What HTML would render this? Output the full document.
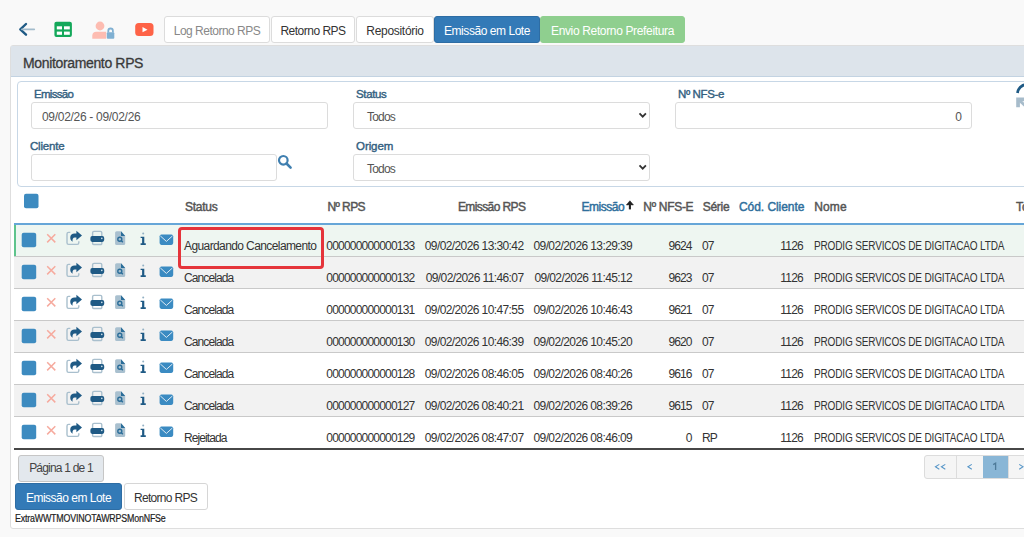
<!DOCTYPE html>
<html><head><meta charset="utf-8">
<style>
*{box-sizing:border-box;margin:0;padding:0}
html,body{width:1024px;height:537px;overflow:hidden;background:#f9f9f9;font-family:"Liberation Sans",sans-serif;color:#333}
.abs{position:absolute}
.tab{position:absolute;top:16px;height:27px;border:1px solid #dcdcdc;border-radius:3px;background:#fff;font-size:12px;line-height:29px;text-align:center;color:#333;letter-spacing:-0.5px}
#panel{position:absolute;left:10px;top:45px;width:1030px;height:484px;background:#fff;border:1px solid #dedede;border-radius:3px}
#phead{position:absolute;left:0;top:0;width:100%;height:31px;background:#dde4eb;border-bottom:1px solid #c3d3e2}
#ptitle{position:absolute;left:12px;top:8.5px;font-size:14px;color:#3a3a3a;letter-spacing:-0.35px;-webkit-text-stroke:0.3px #3a3a3a}
#fset{position:absolute;left:6px;top:35px;width:1030px;height:106px;border:1px solid #c7d7e6;border-radius:4px}
.lbl{position:absolute;font-size:11.5px;font-weight:normal;-webkit-text-stroke:0.4px #33607f;color:#33607f;letter-spacing:-0.5px}
.inp{position:absolute;height:27px;border:1px solid #dcdcdc;border-radius:3px;background:#fff;font-size:12px;color:#555;line-height:29px}
.th{position:absolute;top:200px;font-size:12px;font-weight:normal;-webkit-text-stroke:0.45px currentColor;white-space:nowrap;line-height:14px}
.tr{position:absolute;left:14px;width:1010px;overflow:visible}
.tr>svg{left:-14px!important}
.td{position:absolute;top:14.4px;font-size:12px;color:#333;white-space:nowrap;line-height:14px}
</style></head><body>

<!-- toolbar icons -->
<svg class="abs" style="left:0;top:0" width="160" height="45">
  <path d="M26 24 L20.3 29.35 L26 34.7" fill="none" stroke="#1f5a85" stroke-width="2.4" stroke-linecap="round" stroke-linejoin="round"/>
  <line x1="22" y1="29.35" x2="34.2" y2="29.35" stroke="#a3bccc" stroke-width="1.9" stroke-linecap="round"/>
  <rect x="54.4" y="21.8" width="17.5" height="15.2" rx="2" fill="#14a85a"/>
  <rect x="56.8" y="26.3" width="5.2" height="3.1" fill="#fff"/>
  <rect x="64" y="26.3" width="5.8" height="3.1" fill="#fff"/>
  <rect x="56.8" y="31.6" width="5.2" height="3.2" fill="#fff"/>
  <rect x="64" y="31.6" width="5.8" height="3.2" fill="#fff"/>
  <circle cx="100" cy="26" r="4.4" fill="#fdbcb1"/>
  <path d="M92.3 38.8 V35.5 A4 4 0 0 1 96.3 31.8 H106.2 V38.8 Z" fill="#fdbcb1"/>
  <path d="M108.3 32.5 V30.8 A2.3 2.3 0 0 1 112.9 30.8 V32.5" fill="none" stroke="#80b0d2" stroke-width="1.8"/>
  <rect x="106.8" y="32.2" width="7.5" height="6.6" rx="1" fill="#80b0d2"/>
  <rect x="135.2" y="22.9" width="18.3" height="13" rx="3.5" fill="#fe6347"/>
  <path d="M142.5 27.1 L147.5 29.7 L142.5 32.3 Z" fill="#fff"/>
</svg>

<div class="tab" style="left:164px;width:106px;color:#888">Log Retorno RPS</div>
<div class="tab" style="left:271px;width:84px">Retorno RPS</div>
<div class="tab" style="left:356px;width:78px;letter-spacing:-0.3px">Repositório</div>
<div class="tab" style="left:434px;width:106px;background:#337ab7;border-color:#2e6da4;color:#fff;letter-spacing:-0.45px">Emissão em Lote</div>
<div class="tab" style="left:540px;width:145px;background:#8fcf8f;border-color:#8fcf8f;color:#fff;letter-spacing:-0.35px">Envio Retorno Prefeitura</div>

<div id="panel">
  <div id="phead"><div id="ptitle">Monitoramento RPS</div></div>
  <div id="fset"></div>
</div>

<!-- filter labels & inputs (page coords) -->
<div class="lbl" style="left:34px;top:88px;letter-spacing:-0.7px">Emissão</div>
<div class="inp" style="left:31px;top:102px;width:297px;padding-left:10px;letter-spacing:-0.3px">09/02/26 - 09/02/26</div>
<div class="lbl" style="left:30px;top:139.5px;letter-spacing:-0.2px">Cliente</div>
<div class="inp" style="left:31px;top:154px;width:246px"></div>
<svg class="abs" style="left:277px;top:154px" width="16" height="16"><circle cx="6.3" cy="6.3" r="4.3" fill="none" stroke="#3f7fb0" stroke-width="2.2"/><line x1="9.5" y1="9.5" x2="13.6" y2="13.6" stroke="#3f7fb0" stroke-width="2.6" stroke-linecap="round"/></svg>

<div class="lbl" style="left:356px;top:88px;letter-spacing:-0.35px">Status</div>
<div class="inp" style="left:353px;top:102px;width:297px;padding-left:13px;letter-spacing:-0.8px">Todos</div>
<svg class="abs" style="left:637px;top:111px" width="12" height="9"><path d="M2.5 2.3 L5.7 5.6 L8.9 2.3" fill="none" stroke="#333" stroke-width="1.8"/></svg>
<div class="lbl" style="left:356px;top:139.5px;letter-spacing:-0.07px">Origem</div>
<div class="inp" style="left:353px;top:154px;width:297px;padding-left:13px;letter-spacing:-0.8px">Todos</div>
<svg class="abs" style="left:637px;top:163px" width="12" height="9"><path d="M2.5 2.3 L5.7 5.6 L8.9 2.3" fill="none" stroke="#333" stroke-width="1.8"/></svg>

<div class="lbl" style="left:678px;top:88px;letter-spacing:-0.36px">Nº NFS-e</div>
<div class="inp" style="left:675px;top:102px;width:297px;text-align:right;padding-right:9px">0</div>

<!-- refresh icon -->
<svg class="abs" style="left:1006.5px;top:78px" width="22" height="32">
  <path d="M10.5 15 A9.5 9.5 0 0 1 19 6.5" fill="none" stroke="#1f5a85" stroke-width="2.8"/>
  <path d="M9.2 19.5 H20 V23.2 H12.9 V29.2 H9.2 Z M11 21 L20 29" fill="#a7bccb" stroke="#a7bccb" stroke-width="0"/>
  <path d="M11.5 21.5 L19 28.5" stroke="#a7bccb" stroke-width="3"/>
</svg>

<!-- footer -->
<div class="abs" style="left:18px;top:455px;width:86px;height:27px;background:#e3e8ed;border:1px solid #c6c6c6;border-radius:3px;font-size:12px;line-height:25px;text-align:center;color:#444;letter-spacing:-0.8px">Página 1 de 1</div>
<div class="abs" style="left:15px;top:482.5px;width:107px;height:27px;background:#337ab7;border:1px solid #2e6da4;border-radius:3px;font-size:12px;line-height:29px;text-align:center;color:#fff;letter-spacing:-0.5px">Emissão em Lote</div>
<div class="abs" style="left:123.5px;top:482.5px;width:84px;height:27px;background:#fff;border:1px solid #d6d6d6;border-radius:3px;font-size:12px;line-height:29px;text-align:center;color:#333;letter-spacing:-0.7px">Retorno RPS</div>
<div class="abs" style="left:14.5px;top:512.5px;font-size:10px;line-height:12px;color:#222;letter-spacing:-0.2px;-webkit-text-stroke:0.2px #222;transform:scaleX(0.885);transform-origin:0 0">ExtraWWTMOVINOTAWRPSMonNFSe</div>
<div class="abs" style="left:923.5px;top:455px;width:120px;height:23.5px;border:1px solid #dcdcdc;border-radius:3px;background:#f5f5f5;overflow:hidden"></div>
<div class="abs" style="left:956px;top:456px;width:1px;height:21.5px;background:#dcdcdc"></div>
<div class="abs" style="left:983px;top:455.5px;width:24.5px;height:22.5px;background:#89b6d6"></div>
<div class="abs" style="left:1007.5px;top:456px;width:1px;height:21.5px;background:#dcdcdc"></div>
<svg class="abs" style="left:920px;top:450px" width="104" height="35">
  <path d="M19.3 14.4 L15.4 16.8 L19.3 19.2 M25.3 14.4 L21.4 16.8 L25.3 19.2 M51.8 14.4 L47.9 16.8 L51.8 19.2" fill="none" stroke="#5796c8" stroke-width="1.05"/>
  <path d="M99.2 14.4 L103.1 16.8 L99.2 19.2" fill="none" stroke="#5796c8" stroke-width="1.05"/>
  <path d="M73.2 14.6 L75.6 13.2 V19.9" fill="none" stroke="#4d7a99" stroke-width="1.3"/>
</svg>
<!--TABLE-->
<div id="tbl" class="abs" style="left:0;top:0;width:1024px;height:537px">
<svg class="abs" style="left:0;top:0" width="40" height="220"><rect x="24" y="193.8" width="14.5" height="14.5" rx="2" fill="#3d8bc0"/></svg>
<div class="th" style="left:185px;letter-spacing:-0.25px;color:#555">Status</div>
<div class="th" style="left:327.5px;letter-spacing:-0.6px;color:#555">Nº RPS</div>
<div class="th" style="right:498.69999999999993px;letter-spacing:-0.6px;color:#555">Emissão RPS</div>
<div class="th" style="right:399.9px;letter-spacing:-0.5px;color:#2f6f9c">Emissão</div>
<svg class="abs" style="left:620px;top:195px" width="20" height="20"><path d="M9.9 8 V14.4" stroke="#222" stroke-width="2.1"/><path d="M9.9 5.8 L13.4 9.9 L11.3 9.9 L9.9 8.4 L8.5 9.9 L6.4 9.9 Z" fill="#222" stroke="#222" stroke-width="0.6" stroke-linejoin="round"/></svg>
<div class="th" style="left:643.3px;letter-spacing:-0.3px;color:#555">Nº NFS-E</div>
<div class="th" style="left:702.7px;letter-spacing:-0.25px;color:#555">Série</div>
<div class="th" style="left:739px;letter-spacing:-0.06px;color:#2f6f9c">Cód. Cliente</div>
<div class="th" style="left:814.2px;letter-spacing:0.15px;color:#555">Nome</div>
<div class="th" style="left:1016px;letter-spacing:-0.1px;color:#555">To</div>
<div class="abs" style="left:14px;top:223px;width:1010px;height:2px;background:#66a6d8"></div>
<div class="tr" style="top:225px;height:31px;background:#eef6f1">
<div class="abs" style="left:0;top:0;width:2px;height:31px;background:#5ec48c"></div>
<svg class="abs" style="left:0;top:0" width="180" height="32">
<rect x="21.7" y="7.8" width="14.5" height="14.5" rx="2" fill="#3d8bc0"/>
<path d="M47.2 9.3 L55.3 17.4 M55.3 9.3 L47.2 17.4" stroke="#f6aa9e" stroke-width="1.5"/>
<path d="M70.3 7.4 H68.6 A1.6 1.6 0 0 0 67 9 V17.8 A1.6 1.6 0 0 0 68.6 19.4 H77.2 A1.6 1.6 0 0 0 78.8 17.8 V16.2" fill="none" stroke="#a9bfcd" stroke-width="1.4"/>
<path d="M76.4 5.8 L82 10.5 L76.4 15.2 V12.6 H74.8 C72.9 12.6 72.2 14.2 72.6 16.8 C69.2 14.8 69.2 8.5 74.6 8.5 H76.4 Z" fill="#1f5a85"/>
<path d="M92.6 11 V7.8 A1.4 1.4 0 0 1 94 6.4 H100.4 A1.4 1.4 0 0 1 101.8 7.8 V11 M92.6 16.8 V18.4 A1.1 1.1 0 0 0 93.7 19.5 H100.7 A1.1 1.1 0 0 0 101.8 18.4 V16.8" fill="none" stroke="#a9bfcd" stroke-width="1.4"/>
<rect x="90.4" y="11.1" width="13.8" height="5.8" rx="1.8" fill="#1f5a85"/>
<circle cx="101.8" cy="13.4" r="0.8" fill="#cfe0ea"/>
<path d="M116.6 6.2 H120.9 L125.2 10.9 V18.4 A1.5 1.5 0 0 1 123.7 19.9 H116.6 A1.5 1.5 0 0 1 115.1 18.4 V7.7 A1.5 1.5 0 0 1 116.6 6.2 Z" fill="#a9c0cf"/>
<path d="M121 6.2 L125.2 10.9 H121 Z" fill="#2a6d99"/>
<circle cx="119.8" cy="14.2" r="2" fill="none" stroke="#2a6d99" stroke-width="1.4"/>
<path d="M121.2 15.6 L122.8 17.3" stroke="#2a6d99" stroke-width="1.4"/>
<circle cx="143.2" cy="8.5" r="1" fill="#93b1c4"/>
<path d="M140.6 11.8 H144.3 V18.3 H145.8 V19.9 H140.6 V18.3 H142.1 V13.1 H140.6 Z" fill="#1f5a85"/>
<rect x="159.6" y="9.5" width="13.6" height="10.4" rx="1.8" fill="#3b8bc2"/>
<path d="M160.3 10.9 L166.4 16.4 L172.5 10.9" fill="none" stroke="#dce9f3" stroke-width="1"/>
</svg>
<div class="td" style="left:170px;letter-spacing:-0.6px">Aguardando Cancelamento</div>
<div class="td" style="left:312.3px;letter-spacing:-0.8px">000000000000133</div>
<div class="td" style="right:500.5px;letter-spacing:-0.6px">09/02/2026 13:30:42</div>
<div class="td" style="right:391.79999999999995px;letter-spacing:-0.6px">09/02/2026 13:29:39</div>
<div class="td" style="right:332.5px;letter-spacing:-0.9px">9624</div>
<div class="td" style="left:687.9px;letter-spacing:-0.8px">07</div>
<div class="td" style="right:221.10000000000002px;letter-spacing:-0.8px">1126</div>
<div class="td" style="left:799.6px;letter-spacing:-0.2px;transform:scaleX(0.837);transform-origin:0 0">PRODIG SERVICOS DE DIGITACAO LTDA</div>
</div>
<div class="abs" style="left:14px;top:256px;width:1010px;height:1px;background:#c9c9c9"></div>
<div class="tr" style="top:257px;height:31px;background:#f2f2f2">
<svg class="abs" style="left:0;top:0" width="180" height="32">
<rect x="21.7" y="7.8" width="14.5" height="14.5" rx="2" fill="#3d8bc0"/>
<path d="M47.2 9.3 L55.3 17.4 M55.3 9.3 L47.2 17.4" stroke="#f6aa9e" stroke-width="1.5"/>
<path d="M70.3 7.4 H68.6 A1.6 1.6 0 0 0 67 9 V17.8 A1.6 1.6 0 0 0 68.6 19.4 H77.2 A1.6 1.6 0 0 0 78.8 17.8 V16.2" fill="none" stroke="#a9bfcd" stroke-width="1.4"/>
<path d="M76.4 5.8 L82 10.5 L76.4 15.2 V12.6 H74.8 C72.9 12.6 72.2 14.2 72.6 16.8 C69.2 14.8 69.2 8.5 74.6 8.5 H76.4 Z" fill="#1f5a85"/>
<path d="M92.6 11 V7.8 A1.4 1.4 0 0 1 94 6.4 H100.4 A1.4 1.4 0 0 1 101.8 7.8 V11 M92.6 16.8 V18.4 A1.1 1.1 0 0 0 93.7 19.5 H100.7 A1.1 1.1 0 0 0 101.8 18.4 V16.8" fill="none" stroke="#a9bfcd" stroke-width="1.4"/>
<rect x="90.4" y="11.1" width="13.8" height="5.8" rx="1.8" fill="#1f5a85"/>
<circle cx="101.8" cy="13.4" r="0.8" fill="#cfe0ea"/>
<path d="M116.6 6.2 H120.9 L125.2 10.9 V18.4 A1.5 1.5 0 0 1 123.7 19.9 H116.6 A1.5 1.5 0 0 1 115.1 18.4 V7.7 A1.5 1.5 0 0 1 116.6 6.2 Z" fill="#a9c0cf"/>
<path d="M121 6.2 L125.2 10.9 H121 Z" fill="#2a6d99"/>
<circle cx="119.8" cy="14.2" r="2" fill="none" stroke="#2a6d99" stroke-width="1.4"/>
<path d="M121.2 15.6 L122.8 17.3" stroke="#2a6d99" stroke-width="1.4"/>
<circle cx="143.2" cy="8.5" r="1" fill="#93b1c4"/>
<path d="M140.6 11.8 H144.3 V18.3 H145.8 V19.9 H140.6 V18.3 H142.1 V13.1 H140.6 Z" fill="#1f5a85"/>
<rect x="159.6" y="9.5" width="13.6" height="10.4" rx="1.8" fill="#3b8bc2"/>
<path d="M160.3 10.9 L166.4 16.4 L172.5 10.9" fill="none" stroke="#dce9f3" stroke-width="1"/>
</svg>
<div class="td" style="left:170px;letter-spacing:-0.9px">Cancelada</div>
<div class="td" style="left:312.3px;letter-spacing:-0.8px">000000000000132</div>
<div class="td" style="right:500.5px;letter-spacing:-0.6px">09/02/2026 11:46:07</div>
<div class="td" style="right:391.79999999999995px;letter-spacing:-0.6px">09/02/2026 11:45:12</div>
<div class="td" style="right:332.5px;letter-spacing:-0.9px">9623</div>
<div class="td" style="left:687.9px;letter-spacing:-0.8px">07</div>
<div class="td" style="right:221.10000000000002px;letter-spacing:-0.8px">1126</div>
<div class="td" style="left:799.6px;letter-spacing:-0.2px;transform:scaleX(0.837);transform-origin:0 0">PRODIG SERVICOS DE DIGITACAO LTDA</div>
</div>
<div class="abs" style="left:14px;top:288px;width:1010px;height:1px;background:#c9c9c9"></div>
<div class="tr" style="top:289px;height:31px;background:#fff">
<svg class="abs" style="left:0;top:0" width="180" height="32">
<rect x="21.7" y="7.8" width="14.5" height="14.5" rx="2" fill="#3d8bc0"/>
<path d="M47.2 9.3 L55.3 17.4 M55.3 9.3 L47.2 17.4" stroke="#f6aa9e" stroke-width="1.5"/>
<path d="M70.3 7.4 H68.6 A1.6 1.6 0 0 0 67 9 V17.8 A1.6 1.6 0 0 0 68.6 19.4 H77.2 A1.6 1.6 0 0 0 78.8 17.8 V16.2" fill="none" stroke="#a9bfcd" stroke-width="1.4"/>
<path d="M76.4 5.8 L82 10.5 L76.4 15.2 V12.6 H74.8 C72.9 12.6 72.2 14.2 72.6 16.8 C69.2 14.8 69.2 8.5 74.6 8.5 H76.4 Z" fill="#1f5a85"/>
<path d="M92.6 11 V7.8 A1.4 1.4 0 0 1 94 6.4 H100.4 A1.4 1.4 0 0 1 101.8 7.8 V11 M92.6 16.8 V18.4 A1.1 1.1 0 0 0 93.7 19.5 H100.7 A1.1 1.1 0 0 0 101.8 18.4 V16.8" fill="none" stroke="#a9bfcd" stroke-width="1.4"/>
<rect x="90.4" y="11.1" width="13.8" height="5.8" rx="1.8" fill="#1f5a85"/>
<circle cx="101.8" cy="13.4" r="0.8" fill="#cfe0ea"/>
<path d="M116.6 6.2 H120.9 L125.2 10.9 V18.4 A1.5 1.5 0 0 1 123.7 19.9 H116.6 A1.5 1.5 0 0 1 115.1 18.4 V7.7 A1.5 1.5 0 0 1 116.6 6.2 Z" fill="#a9c0cf"/>
<path d="M121 6.2 L125.2 10.9 H121 Z" fill="#2a6d99"/>
<circle cx="119.8" cy="14.2" r="2" fill="none" stroke="#2a6d99" stroke-width="1.4"/>
<path d="M121.2 15.6 L122.8 17.3" stroke="#2a6d99" stroke-width="1.4"/>
<circle cx="143.2" cy="8.5" r="1" fill="#93b1c4"/>
<path d="M140.6 11.8 H144.3 V18.3 H145.8 V19.9 H140.6 V18.3 H142.1 V13.1 H140.6 Z" fill="#1f5a85"/>
<rect x="159.6" y="9.5" width="13.6" height="10.4" rx="1.8" fill="#3b8bc2"/>
<path d="M160.3 10.9 L166.4 16.4 L172.5 10.9" fill="none" stroke="#dce9f3" stroke-width="1"/>
</svg>
<div class="td" style="left:170px;letter-spacing:-0.9px">Cancelada</div>
<div class="td" style="left:312.3px;letter-spacing:-0.8px">000000000000131</div>
<div class="td" style="right:500.5px;letter-spacing:-0.6px">09/02/2026 10:47:55</div>
<div class="td" style="right:391.79999999999995px;letter-spacing:-0.6px">09/02/2026 10:46:43</div>
<div class="td" style="right:332.5px;letter-spacing:-0.9px">9621</div>
<div class="td" style="left:687.9px;letter-spacing:-0.8px">07</div>
<div class="td" style="right:221.10000000000002px;letter-spacing:-0.8px">1126</div>
<div class="td" style="left:799.6px;letter-spacing:-0.2px;transform:scaleX(0.837);transform-origin:0 0">PRODIG SERVICOS DE DIGITACAO LTDA</div>
</div>
<div class="abs" style="left:14px;top:320px;width:1010px;height:1px;background:#c9c9c9"></div>
<div class="tr" style="top:321px;height:31px;background:#f2f2f2">
<svg class="abs" style="left:0;top:0" width="180" height="32">
<rect x="21.7" y="7.8" width="14.5" height="14.5" rx="2" fill="#3d8bc0"/>
<path d="M47.2 9.3 L55.3 17.4 M55.3 9.3 L47.2 17.4" stroke="#f6aa9e" stroke-width="1.5"/>
<path d="M70.3 7.4 H68.6 A1.6 1.6 0 0 0 67 9 V17.8 A1.6 1.6 0 0 0 68.6 19.4 H77.2 A1.6 1.6 0 0 0 78.8 17.8 V16.2" fill="none" stroke="#a9bfcd" stroke-width="1.4"/>
<path d="M76.4 5.8 L82 10.5 L76.4 15.2 V12.6 H74.8 C72.9 12.6 72.2 14.2 72.6 16.8 C69.2 14.8 69.2 8.5 74.6 8.5 H76.4 Z" fill="#1f5a85"/>
<path d="M92.6 11 V7.8 A1.4 1.4 0 0 1 94 6.4 H100.4 A1.4 1.4 0 0 1 101.8 7.8 V11 M92.6 16.8 V18.4 A1.1 1.1 0 0 0 93.7 19.5 H100.7 A1.1 1.1 0 0 0 101.8 18.4 V16.8" fill="none" stroke="#a9bfcd" stroke-width="1.4"/>
<rect x="90.4" y="11.1" width="13.8" height="5.8" rx="1.8" fill="#1f5a85"/>
<circle cx="101.8" cy="13.4" r="0.8" fill="#cfe0ea"/>
<path d="M116.6 6.2 H120.9 L125.2 10.9 V18.4 A1.5 1.5 0 0 1 123.7 19.9 H116.6 A1.5 1.5 0 0 1 115.1 18.4 V7.7 A1.5 1.5 0 0 1 116.6 6.2 Z" fill="#a9c0cf"/>
<path d="M121 6.2 L125.2 10.9 H121 Z" fill="#2a6d99"/>
<circle cx="119.8" cy="14.2" r="2" fill="none" stroke="#2a6d99" stroke-width="1.4"/>
<path d="M121.2 15.6 L122.8 17.3" stroke="#2a6d99" stroke-width="1.4"/>
<circle cx="143.2" cy="8.5" r="1" fill="#93b1c4"/>
<path d="M140.6 11.8 H144.3 V18.3 H145.8 V19.9 H140.6 V18.3 H142.1 V13.1 H140.6 Z" fill="#1f5a85"/>
<rect x="159.6" y="9.5" width="13.6" height="10.4" rx="1.8" fill="#3b8bc2"/>
<path d="M160.3 10.9 L166.4 16.4 L172.5 10.9" fill="none" stroke="#dce9f3" stroke-width="1"/>
</svg>
<div class="td" style="left:170px;letter-spacing:-0.9px">Cancelada</div>
<div class="td" style="left:312.3px;letter-spacing:-0.8px">000000000000130</div>
<div class="td" style="right:500.5px;letter-spacing:-0.6px">09/02/2026 10:46:39</div>
<div class="td" style="right:391.79999999999995px;letter-spacing:-0.6px">09/02/2026 10:45:20</div>
<div class="td" style="right:332.5px;letter-spacing:-0.9px">9620</div>
<div class="td" style="left:687.9px;letter-spacing:-0.8px">07</div>
<div class="td" style="right:221.10000000000002px;letter-spacing:-0.8px">1126</div>
<div class="td" style="left:799.6px;letter-spacing:-0.2px;transform:scaleX(0.837);transform-origin:0 0">PRODIG SERVICOS DE DIGITACAO LTDA</div>
</div>
<div class="abs" style="left:14px;top:352px;width:1010px;height:1px;background:#c9c9c9"></div>
<div class="tr" style="top:353px;height:31px;background:#fff">
<svg class="abs" style="left:0;top:0" width="180" height="32">
<rect x="21.7" y="7.8" width="14.5" height="14.5" rx="2" fill="#3d8bc0"/>
<path d="M47.2 9.3 L55.3 17.4 M55.3 9.3 L47.2 17.4" stroke="#f6aa9e" stroke-width="1.5"/>
<path d="M70.3 7.4 H68.6 A1.6 1.6 0 0 0 67 9 V17.8 A1.6 1.6 0 0 0 68.6 19.4 H77.2 A1.6 1.6 0 0 0 78.8 17.8 V16.2" fill="none" stroke="#a9bfcd" stroke-width="1.4"/>
<path d="M76.4 5.8 L82 10.5 L76.4 15.2 V12.6 H74.8 C72.9 12.6 72.2 14.2 72.6 16.8 C69.2 14.8 69.2 8.5 74.6 8.5 H76.4 Z" fill="#1f5a85"/>
<path d="M92.6 11 V7.8 A1.4 1.4 0 0 1 94 6.4 H100.4 A1.4 1.4 0 0 1 101.8 7.8 V11 M92.6 16.8 V18.4 A1.1 1.1 0 0 0 93.7 19.5 H100.7 A1.1 1.1 0 0 0 101.8 18.4 V16.8" fill="none" stroke="#a9bfcd" stroke-width="1.4"/>
<rect x="90.4" y="11.1" width="13.8" height="5.8" rx="1.8" fill="#1f5a85"/>
<circle cx="101.8" cy="13.4" r="0.8" fill="#cfe0ea"/>
<path d="M116.6 6.2 H120.9 L125.2 10.9 V18.4 A1.5 1.5 0 0 1 123.7 19.9 H116.6 A1.5 1.5 0 0 1 115.1 18.4 V7.7 A1.5 1.5 0 0 1 116.6 6.2 Z" fill="#a9c0cf"/>
<path d="M121 6.2 L125.2 10.9 H121 Z" fill="#2a6d99"/>
<circle cx="119.8" cy="14.2" r="2" fill="none" stroke="#2a6d99" stroke-width="1.4"/>
<path d="M121.2 15.6 L122.8 17.3" stroke="#2a6d99" stroke-width="1.4"/>
<circle cx="143.2" cy="8.5" r="1" fill="#93b1c4"/>
<path d="M140.6 11.8 H144.3 V18.3 H145.8 V19.9 H140.6 V18.3 H142.1 V13.1 H140.6 Z" fill="#1f5a85"/>
<rect x="159.6" y="9.5" width="13.6" height="10.4" rx="1.8" fill="#3b8bc2"/>
<path d="M160.3 10.9 L166.4 16.4 L172.5 10.9" fill="none" stroke="#dce9f3" stroke-width="1"/>
</svg>
<div class="td" style="left:170px;letter-spacing:-0.9px">Cancelada</div>
<div class="td" style="left:312.3px;letter-spacing:-0.8px">000000000000128</div>
<div class="td" style="right:500.5px;letter-spacing:-0.6px">09/02/2026 08:46:05</div>
<div class="td" style="right:391.79999999999995px;letter-spacing:-0.6px">09/02/2026 08:40:26</div>
<div class="td" style="right:332.5px;letter-spacing:-0.9px">9616</div>
<div class="td" style="left:687.9px;letter-spacing:-0.8px">07</div>
<div class="td" style="right:221.10000000000002px;letter-spacing:-0.8px">1126</div>
<div class="td" style="left:799.6px;letter-spacing:-0.2px;transform:scaleX(0.837);transform-origin:0 0">PRODIG SERVICOS DE DIGITACAO LTDA</div>
</div>
<div class="abs" style="left:14px;top:384px;width:1010px;height:1px;background:#c9c9c9"></div>
<div class="tr" style="top:385px;height:31px;background:#f2f2f2">
<svg class="abs" style="left:0;top:0" width="180" height="32">
<rect x="21.7" y="7.8" width="14.5" height="14.5" rx="2" fill="#3d8bc0"/>
<path d="M47.2 9.3 L55.3 17.4 M55.3 9.3 L47.2 17.4" stroke="#f6aa9e" stroke-width="1.5"/>
<path d="M70.3 7.4 H68.6 A1.6 1.6 0 0 0 67 9 V17.8 A1.6 1.6 0 0 0 68.6 19.4 H77.2 A1.6 1.6 0 0 0 78.8 17.8 V16.2" fill="none" stroke="#a9bfcd" stroke-width="1.4"/>
<path d="M76.4 5.8 L82 10.5 L76.4 15.2 V12.6 H74.8 C72.9 12.6 72.2 14.2 72.6 16.8 C69.2 14.8 69.2 8.5 74.6 8.5 H76.4 Z" fill="#1f5a85"/>
<path d="M92.6 11 V7.8 A1.4 1.4 0 0 1 94 6.4 H100.4 A1.4 1.4 0 0 1 101.8 7.8 V11 M92.6 16.8 V18.4 A1.1 1.1 0 0 0 93.7 19.5 H100.7 A1.1 1.1 0 0 0 101.8 18.4 V16.8" fill="none" stroke="#a9bfcd" stroke-width="1.4"/>
<rect x="90.4" y="11.1" width="13.8" height="5.8" rx="1.8" fill="#1f5a85"/>
<circle cx="101.8" cy="13.4" r="0.8" fill="#cfe0ea"/>
<path d="M116.6 6.2 H120.9 L125.2 10.9 V18.4 A1.5 1.5 0 0 1 123.7 19.9 H116.6 A1.5 1.5 0 0 1 115.1 18.4 V7.7 A1.5 1.5 0 0 1 116.6 6.2 Z" fill="#a9c0cf"/>
<path d="M121 6.2 L125.2 10.9 H121 Z" fill="#2a6d99"/>
<circle cx="119.8" cy="14.2" r="2" fill="none" stroke="#2a6d99" stroke-width="1.4"/>
<path d="M121.2 15.6 L122.8 17.3" stroke="#2a6d99" stroke-width="1.4"/>
<circle cx="143.2" cy="8.5" r="1" fill="#93b1c4"/>
<path d="M140.6 11.8 H144.3 V18.3 H145.8 V19.9 H140.6 V18.3 H142.1 V13.1 H140.6 Z" fill="#1f5a85"/>
<rect x="159.6" y="9.5" width="13.6" height="10.4" rx="1.8" fill="#3b8bc2"/>
<path d="M160.3 10.9 L166.4 16.4 L172.5 10.9" fill="none" stroke="#dce9f3" stroke-width="1"/>
</svg>
<div class="td" style="left:170px;letter-spacing:-0.9px">Cancelada</div>
<div class="td" style="left:312.3px;letter-spacing:-0.8px">000000000000127</div>
<div class="td" style="right:500.5px;letter-spacing:-0.6px">09/02/2026 08:40:21</div>
<div class="td" style="right:391.79999999999995px;letter-spacing:-0.6px">09/02/2026 08:39:26</div>
<div class="td" style="right:332.5px;letter-spacing:-0.9px">9615</div>
<div class="td" style="left:687.9px;letter-spacing:-0.8px">07</div>
<div class="td" style="right:221.10000000000002px;letter-spacing:-0.8px">1126</div>
<div class="td" style="left:799.6px;letter-spacing:-0.2px;transform:scaleX(0.837);transform-origin:0 0">PRODIG SERVICOS DE DIGITACAO LTDA</div>
</div>
<div class="abs" style="left:14px;top:416px;width:1010px;height:1px;background:#c9c9c9"></div>
<div class="tr" style="top:417px;height:32px;background:#fff">
<svg class="abs" style="left:0;top:0" width="180" height="32">
<rect x="21.7" y="7.8" width="14.5" height="14.5" rx="2" fill="#3d8bc0"/>
<path d="M47.2 9.3 L55.3 17.4 M55.3 9.3 L47.2 17.4" stroke="#f6aa9e" stroke-width="1.5"/>
<path d="M70.3 7.4 H68.6 A1.6 1.6 0 0 0 67 9 V17.8 A1.6 1.6 0 0 0 68.6 19.4 H77.2 A1.6 1.6 0 0 0 78.8 17.8 V16.2" fill="none" stroke="#a9bfcd" stroke-width="1.4"/>
<path d="M76.4 5.8 L82 10.5 L76.4 15.2 V12.6 H74.8 C72.9 12.6 72.2 14.2 72.6 16.8 C69.2 14.8 69.2 8.5 74.6 8.5 H76.4 Z" fill="#1f5a85"/>
<path d="M92.6 11 V7.8 A1.4 1.4 0 0 1 94 6.4 H100.4 A1.4 1.4 0 0 1 101.8 7.8 V11 M92.6 16.8 V18.4 A1.1 1.1 0 0 0 93.7 19.5 H100.7 A1.1 1.1 0 0 0 101.8 18.4 V16.8" fill="none" stroke="#a9bfcd" stroke-width="1.4"/>
<rect x="90.4" y="11.1" width="13.8" height="5.8" rx="1.8" fill="#1f5a85"/>
<circle cx="101.8" cy="13.4" r="0.8" fill="#cfe0ea"/>
<path d="M116.6 6.2 H120.9 L125.2 10.9 V18.4 A1.5 1.5 0 0 1 123.7 19.9 H116.6 A1.5 1.5 0 0 1 115.1 18.4 V7.7 A1.5 1.5 0 0 1 116.6 6.2 Z" fill="#a9c0cf"/>
<path d="M121 6.2 L125.2 10.9 H121 Z" fill="#2a6d99"/>
<circle cx="119.8" cy="14.2" r="2" fill="none" stroke="#2a6d99" stroke-width="1.4"/>
<path d="M121.2 15.6 L122.8 17.3" stroke="#2a6d99" stroke-width="1.4"/>
<circle cx="143.2" cy="8.5" r="1" fill="#93b1c4"/>
<path d="M140.6 11.8 H144.3 V18.3 H145.8 V19.9 H140.6 V18.3 H142.1 V13.1 H140.6 Z" fill="#1f5a85"/>
<rect x="159.6" y="9.5" width="13.6" height="10.4" rx="1.8" fill="#3b8bc2"/>
<path d="M160.3 10.9 L166.4 16.4 L172.5 10.9" fill="none" stroke="#dce9f3" stroke-width="1"/>
</svg>
<div class="td" style="left:170px;letter-spacing:-0.9px">Rejeitada</div>
<div class="td" style="left:312.3px;letter-spacing:-0.8px">000000000000129</div>
<div class="td" style="right:500.5px;letter-spacing:-0.6px">09/02/2026 08:47:07</div>
<div class="td" style="right:391.79999999999995px;letter-spacing:-0.6px">09/02/2026 08:46:09</div>
<div class="td" style="right:332.5px;letter-spacing:-0.9px">0</div>
<div class="td" style="left:687.9px;letter-spacing:-0.8px">RP</div>
<div class="td" style="right:221.10000000000002px;letter-spacing:-0.8px">1126</div>
<div class="td" style="left:799.6px;letter-spacing:-0.2px;transform:scaleX(0.837);transform-origin:0 0">PRODIG SERVICOS DE DIGITACAO LTDA</div>
</div>
<div class="abs" style="left:14px;top:448px;width:1010px;height:2px;background:#474747"></div>
<div class="abs" style="left:177.5px;top:227px;width:146.5px;height:41.5px;border:3px solid #e5343b;border-radius:4px"></div>
</div>
<!--/TABLE-->
</body></html>
